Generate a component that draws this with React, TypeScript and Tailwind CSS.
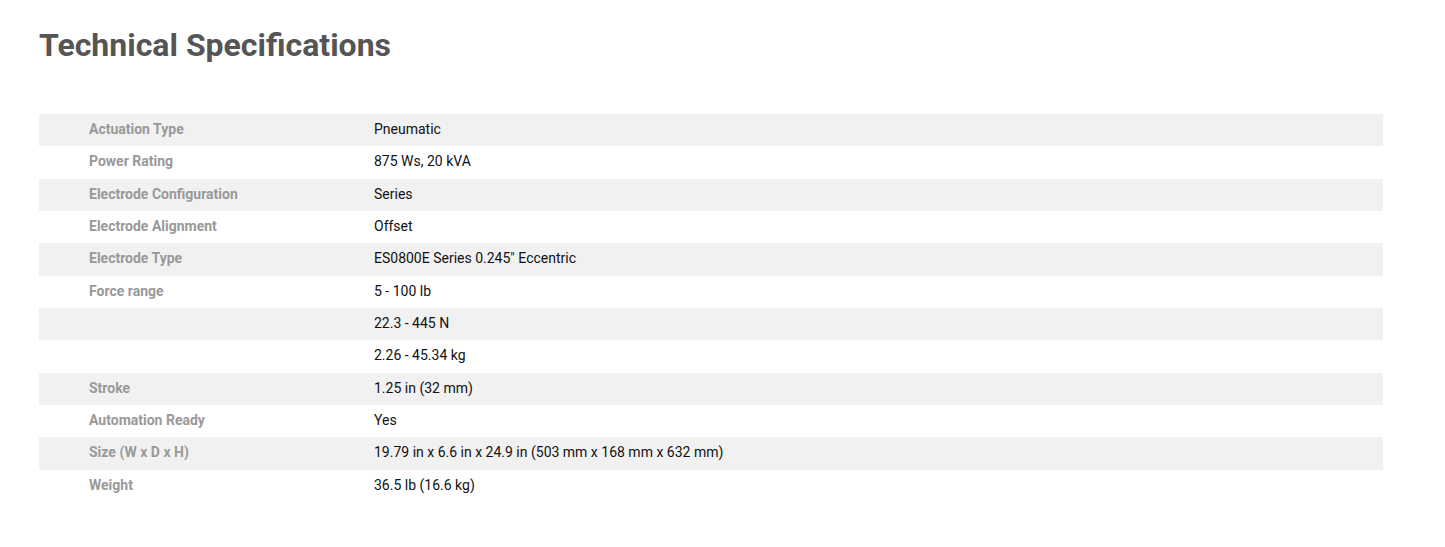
const specs: [string, string][] = [
  ['Actuation Type', 'Pneumatic'],
  ['Power Rating', '875 Ws, 20 kVA'],
  ['Electrode Configuration', 'Series'],
  ['Electrode Alignment', 'Offset'],
  ['Electrode Type', 'ES0800E Series 0.245" Eccentric'],
  ['Force range', '5 - 100 lb'],
  ['', '22.3 - 445 N'],
  ['', '2.26 - 45.34 kg'],
  ['Stroke', '1.25 in (32 mm)'],
  ['Automation Ready', 'Yes'],
  ['Size (W x D x H)', '19.79 in x 6.6 in x 24.9 in (503 mm x 168 mm x 632 mm)'],
  ['Weight', '36.5 lb (16.6 kg)'],
];

export default function App() {
  return (
    <div className="min-h-[547px] bg-white px-[39px] pt-[25px] font-['Roboto',sans-serif]">
      {/* Heading */}
      <h2 className="text-[32px] font-bold leading-[40px] text-[#555555]">Technical Specifications</h2>

      {/* Spec table */}
      <div className="mt-[49px] w-[1344px]">
        {specs.map(([label, value], i) => (
          <div
            key={i}
            className={`flex h-[32.33px] items-center pb-[1px] text-[14px] ${i % 2 === 0 ? 'bg-[#f1f1f1]' : 'bg-white'}`}
          >
            <div className="w-[335px] shrink-0 pl-[50px] font-bold text-[#999999]">{label}</div>
            <div className="text-[#111111]">{value}</div>
          </div>
        ))}
      </div>
    </div>
  );
}
